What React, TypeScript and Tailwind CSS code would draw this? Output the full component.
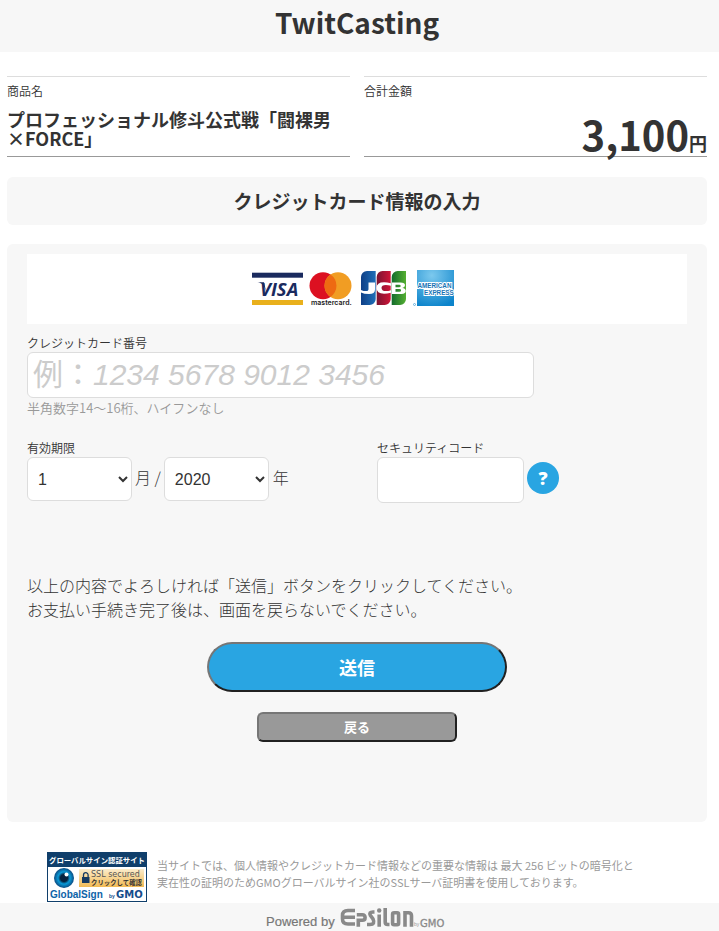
import React from "react";

const CardBrands: React.FC = () => (
    <svg className="block h-10 w-[206px]" viewBox="0 0 206 40" role="img" aria-label="VISA mastercard JCB American Express">
        <defs>
            <linearGradient id="jcbBlue" x1="0" x2="1">
                <stop offset="0" stopColor="#0f3f86" />
                <stop offset="1" stopColor="#1f6fb8" />
            </linearGradient>
            <linearGradient id="jcbRed" x1="0" x2="1">
                <stop offset="0" stopColor="#7a1431" />
                <stop offset="1" stopColor="#d01437" />
            </linearGradient>
            <linearGradient id="jcbGreen" x1="0" x2="1">
                <stop offset="0" stopColor="#136b2c" />
                <stop offset="1" stopColor="#55b032" />
            </linearGradient>
            <radialGradient id="amex" cx="0.4" cy="0.15" r="0.9">
                <stop offset="0" stopColor="#7cc9ee" />
                <stop offset="1" stopColor="#0d84cb" />
            </radialGradient>
        </defs>

        {/* VISA */}
        <rect x="2" y="4.700" width="51" height="5" fill="#1a2a5e" />
        <rect x="2" y="32" width="51" height="5" fill="#e9b01c" />
        <path d="M7.500 14.300h6.500l2 9-2.500-6C12 15.300 9.500 14.700 7.500 14.300z" fill="#1a2a5e" />
        <text x="10" y="28" fontSize="18.500" fontWeight="700" fontStyle="italic" fontFamily="Open Sans, sans-serif" fill="#1a2a5e">
            VISA
        </text>

        {/* mastercard */}
        <circle cx="73" cy="17.700" r="13.500" fill="#dc1021" />
        <circle cx="88" cy="17.700" r="13.500" fill="#f19d23" />
        <path d="M80.500 6.500a13.500 13.500 0 0 1 0 22.400a13.500 13.500 0 0 1 0-22.400z" fill="#ee6a12" />
        <text x="61" y="37" fontSize="7" fontWeight="600" fontFamily="Inter, sans-serif" fill="#1c1c1c">
            mastercard.
        </text>

        {/* JCB */}
        <path d="M117 3h8.700v28a6 6 0 0 1-6 6H111V9a6 6 0 0 1 6-6z" fill="url(#jcbBlue)" />
        <path d="M132.500 3h8.200v28a6 6 0 0 1-6 6h-8V9a6 6 0 0 1 5.800-6z" fill="url(#jcbRed)" />
        <path d="M148 3h8v28a6 6 0 0 1-6 6h-8.300V9a6 6 0 0 1 6.300-6z" fill="url(#jcbGreen)" />
        <path
            d="M118.500 14.500h6.500v7q0 4.500-6 4.500-5 0-8-1.500v-2.600q2.800 1.200 4.800 1.200 2.700 0 2.700-2.200zM141 15.200v2.600q-6-1.800-8.500 0-2 2 0 4.400 2.500 1.800 8.500 0v2.600q-14.500 3-14.500-4.800t14.500-4.800z"
            fill="#fff"
        />
        <path
            d="M142 14.500h8.500q4.500 0 4.500 2.700 0 2.300-2.700 2.700 3.500.4 3.500 3.100T151.500 26H142zM145.500 16.700v2.500h3.500q1.700 0 1.700-1.300t-1.700-1.200zM145.500 21.100v2.700h3.800q1.800 0 1.800-1.400t-1.800-1.300z"
            fill="#fff"
            fillRule="evenodd"
        />

        {/* American Express */}
        <circle cx="164.500" cy="36.500" r="1" fill="none" stroke="#3c9bd3" strokeWidth="0.700" />
        <rect x="167" y="2" width="37" height="36" fill="url(#amex)" />
        <g fontFamily="Liberation Sans, sans-serif" fontWeight="700" fontSize="6.300" fill="#1673b5" stroke="#fff" strokeWidth="1.900" paintOrder="stroke">
            <text x="167.500" y="20">AMERICAN</text>
            <text x="174" y="27">EXPRESS</text>
        </g>
    </svg>
);

const GlobalSignSeal: React.FC = () => (
    <svg className="block h-[50px] w-[100px] shrink-0" viewBox="0 0 100 50" role="img" aria-label="GlobalSign">
        <defs>
            <linearGradient id="sealGold" x1="0" y1="0" x2="0" y2="1">
                <stop offset="0" stopColor="#fbeccb" />
                <stop offset="1" stopColor="#f2bb55" />
            </linearGradient>
            <radialGradient id="sealEye">
                <stop offset="0.350" stopColor="#06233f" />
                <stop offset="0.600" stopColor="#0a9bd8" />
                <stop offset="1" stopColor="#0b4a80" />
            </radialGradient>
        </defs>
        <rect x="0.500" y="0.500" width="99" height="49" fill="#fff" stroke="#103f6b" />
        <rect width="100" height="15" fill="#103f6b" />
        <text x="50" y="10.500" textAnchor="middle" fontSize="7.400" fontWeight="700" fontFamily="Noto Sans CJK JP, sans-serif" fill="#fff">
            グローバルサイン認証サイト
        </text>
        <circle cx="17" cy="26" r="10" fill="url(#sealEye)" />
        <circle cx="19.500" cy="22.500" r="2" fill="#fff" />
        <rect x="32" y="17" width="65" height="18" fill="url(#sealGold)" />
        <path d="M36.500 25v-2a2.300 2.300 0 0 1 4.600 0v2" fill="none" stroke="#173a60" strokeWidth="1.300" />
        <rect x="35" y="25" width="7.500" height="6" fill="#173a60" />
        <text x="44" y="24.500" fontSize="8" fontWeight="400" fontFamily="DejaVu Sans, sans-serif" fill="#555">
            SSL secured
        </text>
        <text x="44" y="33" fontSize="6.400" fontWeight="700" fontFamily="Noto Sans CJK JP, sans-serif" fill="#333">
            クリックして確認
        </text>
        <text x="3" y="46" fontSize="10" fontWeight="700" fontFamily="Liberation Sans, sans-serif" fill="#0d63a8">
            GlobalSign
        </text>
        <text x="62" y="46" fontSize="5" fontWeight="700" fontFamily="Liberation Sans, sans-serif" fill="#164d8c">
            by
        </text>
        <text x="69" y="46" fontSize="10" fontWeight="700" fontFamily="DejaVu Sans, sans-serif" fill="#164d8c">
            GMO
        </text>
    </svg>
);

const EpsilonLogo: React.FC = () => (
    <svg className="block h-7 w-[184px]" viewBox="0 0 184 28" role="img" aria-label="Powered by Epsilon by GMO">
        <text x="1" y="23" fontSize="13" fontFamily="Liberation Sans, sans-serif" fill="#777" stroke="#777" strokeWidth="0.200">
            Powered by
        </text>
        {/* Epsilon wordmark */}
        <g fill="none" stroke="#898989" strokeWidth="3.600">
            <path d="M90 7.500h-7q-5.500 0-5.500 5v3.500q0 5 5.500 5h7M78 14.300h12" />
            <path d="M93.300 23.800v-6.500h4q2.800 0 2.800-2.800t-2.800-2.800h-5.500" />
            <path d="M109.500 9h-1.500q-4.500 0-2.500 3.500l2.500 3.500q2.500 5.500-3 5.500h-3" />
            <path d="M114.200 11.500v12.300M120.200 5v14q0 2.500 2.500 2.500h1.800" />
            <rect x="127.600" y="9.800" width="6" height="11.900" rx="1.500" />
            <path d="M140 23.800V9.800h3.500q3 0 3 3v11" />
        </g>
        <circle cx="114.200" cy="7.500" r="2.200" fill="#898989" />
        <text x="149" y="23" fontSize="5" fontFamily="Liberation Sans, sans-serif" fill="#999">
            by
        </text>
        <text x="155" y="23.500" fontSize="10" fontWeight="400" fontFamily="DejaVu Sans, sans-serif" fill="#898989" stroke="#898989" strokeWidth="0.300">
            GMO
        </text>
    </svg>
);

const App: React.FC = () => {
    return (
        <div className="flex min-h-screen flex-col bg-white font-['Noto_Sans_CJK_JP',sans-serif] font-[350] text-[#333]">
            <header className="bg-[#f7f7f7] pr-[5px] text-center">
                <h1 className="pt-[2px] pb-[10px] text-[28px] leading-10 font-bold">TwitCasting</h1>
            </header>

            <main className="pr-3 pl-[7px]">
                {/* Order summary */}
                <dl className="mt-6 grid grid-cols-2 gap-[14px]">
                    <div className="flex h-[81px] flex-col border-t border-b border-t-[#ddd] border-b-[#999]">
                        <dt className="pt-1 text-xs leading-5">商品名</dt>
                        <dd className="pt-[9px] text-lg leading-[19px] font-bold">プロフェッショナル修斗公式戦「闘裸男×FORCE」</dd>
                    </div>
                    <div className="flex h-[81px] flex-col border-t border-b border-t-[#ddd] border-b-[#999]">
                        <dt className="pt-1 text-xs leading-5">合計金額</dt>
                        <dd className="pt-3 text-right text-[40px] leading-[42px] font-bold">
                            3,100<span className="text-lg leading-none">円</span>
                        </dd>
                    </div>
                </dl>

                <h2 className="mt-5 rounded-md bg-[#f7f7f7] py-3 text-center text-[19px] leading-6 font-bold">
                    クレジットカード情報の入力
                </h2>

                <form className="mt-[19px] rounded-md bg-[#f7f7f7] px-5 pt-[10px] pb-20" onSubmit={(e) => e.preventDefault()}>
                    <div className="flex h-[70px] items-center justify-center bg-white pr-2 pb-[2px]">
                        <CardBrands />
                    </div>

                    <div className="pt-[10px]">
                        <label htmlFor="card" className="block text-xs leading-[18px]">
                            クレジットカード番号
                        </label>
                        <input
                            id="card"
                            type="text"
                            placeholder="例：1234 5678 9012 3456"
                            className="block h-[46px] w-[507px] max-w-full rounded-md border border-[#ddd] bg-white px-[5px] font-['Liberation_Sans','Noto_Sans_CJK_JP',sans-serif] text-3xl font-normal [font-synthesis-style:none] placeholder:text-[#ccc] placeholder:italic"
                        />
                        <p className="text-[13px] leading-5 text-[#999]">半角数字14～16桁、ハイフンなし</p>
                    </div>

                    <div className="grid grid-cols-[350px_1fr] pt-[21px]">
                        <div>
                            <label htmlFor="month" className="block text-xs leading-[18px]">
                                有効期限
                            </label>
                            <div className="flex items-center">
                                <select
                                    id="month"
                                    className="h-11 w-[105px] rounded-md border border-[#ddd] bg-white px-[6px] font-['Liberation_Sans',sans-serif] text-base">
                                    <option>1</option>
                                </select>
                                <span className="px-[3px] pb-1 font-light">月 /</span>
                                <select
                                    aria-label="年"
                                    className="h-11 w-[105px] rounded-md border border-[#ddd] bg-white px-[6px] font-['Liberation_Sans',sans-serif] text-base">
                                    <option>2020</option>
                                </select>
                                <span className="pb-1 pl-1 font-light">年</span>
                            </div>
                        </div>
                        <div>
                            <label htmlFor="cvv" className="block text-xs leading-[18px]">
                                セキュリティコード
                            </label>
                            <div className="flex items-start gap-[3px]">
                                <input id="cvv" type="text" className="h-[46px] w-[147px] rounded-md border border-[#ddd] bg-white px-[5px] text-3xl" />
                                <button
                                    type="button"
                                    className="mt-[5px] size-8 rounded-full bg-[#29a5e2] font-['Open_Sans',sans-serif] text-lg leading-8 font-extrabold text-white">
                                    ?
                                </button>
                            </div>
                        </div>
                    </div>

                    <p className="pt-[70px] leading-6 font-light">
                        以上の内容でよろしければ「送信」ボタンをクリックしてください。
                        <br />
                        お支払い手続き完了後は、画面を戻らないでください。
                    </p>

                    <div className="flex flex-col items-center gap-5 pt-[21px]">
                        <button
                            type="submit"
                            className="h-[50px] w-[300px] rounded-full border-2 border-t-[#767676] border-r-[#212121] border-b-[#212121] border-l-[#767676] bg-[#29a5e2] text-lg font-bold text-white">
                            送信
                        </button>
                        <button
                            type="button"
                            className="h-[30px] w-[200px] rounded-md border-2 border-t-[#767676] border-r-[#212121] border-b-[#212121] border-l-[#767676] bg-[#999] text-[13px] leading-5 font-bold text-white">
                            戻る
                        </button>
                    </div>
                </form>

                <div className="mt-[30px] flex gap-[10px] pl-10">
                    <GlobalSignSeal />
                    <p className="pt-[5px] text-[11px] leading-[17px] font-normal text-[#999]">
                        当サイトでは、個人情報やクレジットカード情報などの重要な情報は 最大 256 ビットの暗号化と
                        <br />
                        実在性の証明のためGMOグローバルサイン社のSSLサーバ証明書を使用しております。
                    </p>
                </div>
            </main>

            <footer className="mt-px flex grow items-start justify-center bg-[#f7f7f7] pr-[5px]">
                <EpsilonLogo />
            </footer>
        </div>
    );
};

export default App;
